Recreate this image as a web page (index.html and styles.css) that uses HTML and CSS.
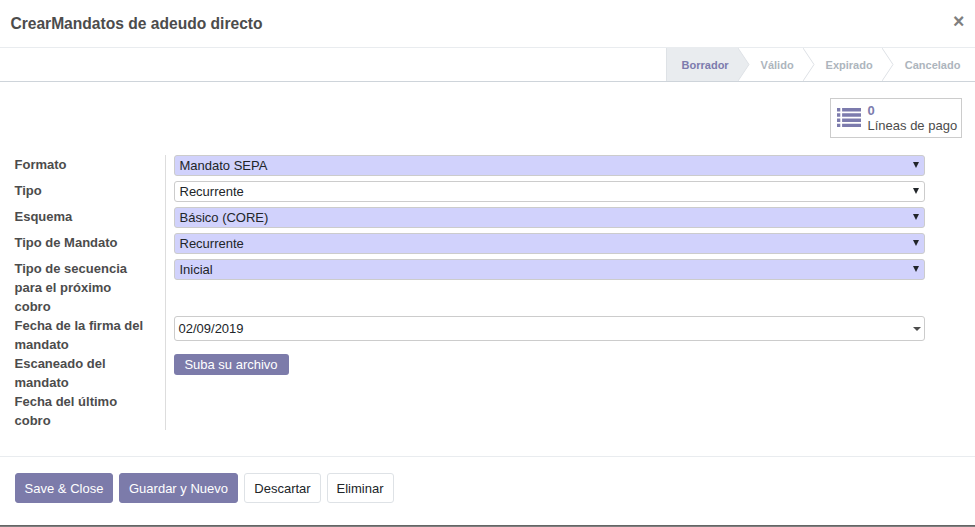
FILE: index.html
```html
<!DOCTYPE html>
<html lang="es">
<head>
<meta charset="utf-8">
<title>Mandatos de adeudo directo</title>
<link rel="stylesheet" href="styles.css">
</head>
<body>
<div class="modal">
  <header class="modal-header">
    <h4 class="title">CrearMandatos de adeudo directo</h4>
    <button class="close" aria-label="Cerrar">×</button>
  </header>
  <div class="statusbar">
    <div class="stage active">Borrador<svg class="arrow" width="12" height="33" viewBox="0 0 12 33"><path d="M0 0L11 16.5L0 33z" fill="#e9ecef"/><path d="M0 0L11 16.5L0 33" fill="none" stroke="#dee2e6"/></svg></div>
    <div class="stage valid">Válido<svg class="arrow" width="12" height="33" viewBox="0 0 12 33"><path d="M0 0L11 16.5L0 33" fill="none" stroke="#dee2e6"/></svg></div>
    <div class="stage expired">Expirado<svg class="arrow" width="12" height="33" viewBox="0 0 12 33"><path d="M0 0L11 16.5L0 33" fill="none" stroke="#dee2e6"/></svg></div>
    <div class="stage cancelled">Cancelado</div>
  </div>
  <main class="sheet">
    <div class="button-box">
      <button class="stat-button">
        <svg class="list-icon" width="24" height="20" viewBox="0 0 24 20"><path fill="#7c7bad" d="M0 .1h3.3v3.4H0zM5.1.1H24v3.4H5.1zM0 5.3h3.3v3.4H0zM5.1 5.3H24v3.4H5.1zM0 10.5h3.3v3.4H0zM5.1 10.5H24v3.4H5.1zM0 15.7h3.3v3.4H0zM5.1 15.7H24v3.4H5.1z"/></svg>
        <span class="stat-info"><span class="stat-value">0</span><span>Líneas de pago</span></span>
      </button>
    </div>
    <div class="group">
      <div class="label">Formato</div>
      <div class="cell"><div class="select required">Mandato SEPA<svg class="caret" width="6" height="6"><path d="M0 0h6L3 6z"/></svg></div></div>
      <div class="label">Tipo</div>
      <div class="cell"><div class="select">Recurrente<svg class="caret" width="6" height="6"><path d="M0 0h6L3 6z"/></svg></div></div>
      <div class="label">Esquema</div>
      <div class="cell"><div class="select required">Básico (CORE)<svg class="caret" width="6" height="6"><path d="M0 0h6L3 6z"/></svg></div></div>
      <div class="label">Tipo de Mandato</div>
      <div class="cell"><div class="select required">Recurrente<svg class="caret" width="6" height="6"><path d="M0 0h6L3 6z"/></svg></div></div>
      <div class="label">Tipo de secuencia para el próximo cobro</div>
      <div class="cell"><div class="select required">Inicial<svg class="caret" width="6" height="6"><path d="M0 0h6L3 6z"/></svg></div></div>
      <div class="label">Fecha de la firma del mandato</div>
      <div class="cell"><div class="date">02/09/2019<svg class="date-caret" width="8" height="4"><path d="M0 0h8L4 4z"/></svg></div></div>
      <div class="label">Escaneado del mandato</div>
      <div class="cell"><button class="upload">Suba su archivo</button></div>
      <div class="label">Fecha del último cobro</div>
      <div class="cell"></div>
    </div>
  </main>
  <footer class="modal-footer">
    <button class="btn primary save">Save &amp; Close</button>
    <button class="btn primary save-new">Guardar y Nuevo</button>
    <button class="btn discard">Descartar</button>
    <button class="btn remove">Eliminar</button>
  </footer>
</div>
</body>
</html>
```
FILE: styles.css
```css
* {
  box-sizing: border-box;
}

body {
  margin: 0;
  height: 527px;
  overflow: hidden;
  background: #7f7f7f;
  color: #4c4c4c;
  font: 13px/19px "Liberation Sans", Arial, sans-serif;
}

button {
  font: inherit;
  padding: 0;
  border: 0;
  background: none;
  color: inherit;
}

.modal {
  height: 526px;
  background: #fff;
  border-bottom: 1px solid #656565;
}

.modal-header {
  display: flex;
  justify-content: space-between;
  height: 48px;
  padding: 0 10.6px 0 10.4px;
  border-bottom: 1px solid #e9ecef;
}

.title {
  margin: 0;
  font-size: 15.6px;
  line-height: 47px;
}

.close {
  height: 42px;
  color: #7f7f7f;
  font-size: 19.5px;
  font-weight: bold;
  line-height: 42px;
}

.statusbar {
  display: flex;
  justify-content: flex-end;
  height: 34px;
  border-bottom: 1px solid #ced4da;
  font-size: 11px;
  font-weight: bold;
  line-height: 34px;
  color: #adb5bd;
}

.stage {
  position: relative;
  height: 33px;
}

.stage.active {
  width: 72px;
  padding-left: 14.6px;
  border-left: 1px solid #dee2e6;
  background: #e9ecef;
  color: #7c7bad;
}

.valid {
  width: 65px;
  padding-left: 22.6px;
}

.expired {
  width: 79px;
  padding-left: 22.6px;
}

.cancelled {
  width: 93px;
  padding-left: 22.8px;
}

.arrow {
  position: absolute;
  top: 0;
  left: calc(100% - 0.5px);
}

.sheet {
  height: 374px;
  padding: 16px 13px 0 15px;
}

.button-box {
  display: flex;
  justify-content: flex-end;
  margin-bottom: 17px;
}

.stat-button {
  display: flex;
  align-items: center;
  width: 132px;
  height: 40px;
  padding-left: 6px;
  border: 1px solid #ccc;
  text-align: left;
  line-height: 15px;
}

.list-icon {
  margin-right: 6.5px;
}

.stat-info {
  display: flex;
  flex-direction: column;
  white-space: nowrap;
}

.stat-value {
  color: #7c7bad;
  font-weight: bold;
}

.group {
  display: grid;
  grid-template-columns: 151px 759px;
}

.label {
  min-height: 26px;
  margin-left: -0.5px;
  padding-right: 18px;
  border-right: 1px solid #ddd;
  font-weight: bold;
}

.cell {
  padding-left: 8px;
}

.select,
.date {
  display: flex;
  justify-content: space-between;
  border: 1px solid #ccc;
  border-radius: 3px;
  color: #212529;
}

.select {
  height: 21px;
  padding: 0 5px 0 4.5px;
  line-height: 20px;
}

.required {
  background: #d1d2fc;
}

.caret {
  margin-top: 6px;
  fill: #212529;
}

.date {
  height: 25px;
  padding: 0 3px 0 3.5px;
  line-height: 24px;
}

.date-caret {
  margin-top: 10px;
  fill: #4c4c4c;
}

.upload {
  display: block;
  width: 115px;
  height: 21px;
  padding-right: 1px;
  border-radius: 3px;
  background: #7c7baa;
  color: #fff;
  line-height: 21px;
}

.modal-footer {
  display: flex;
  gap: 6px;
  padding: 16px 15px;
  border-top: 1px solid #e9ecef;
}

.btn {
  height: 30px;
  border: 1px solid #dee2e6;
  border-radius: 3px;
  color: #212529;
}

.btn.primary {
  border-color: #7c7baa;
  background: #7c7baa;
  color: #fff;
}

.save {
  width: 98px;
}

.save-new {
  width: 119px;
}

.discard {
  width: 77px;
}

.remove {
  width: 67px;
  padding-right: 1px;
}
```
